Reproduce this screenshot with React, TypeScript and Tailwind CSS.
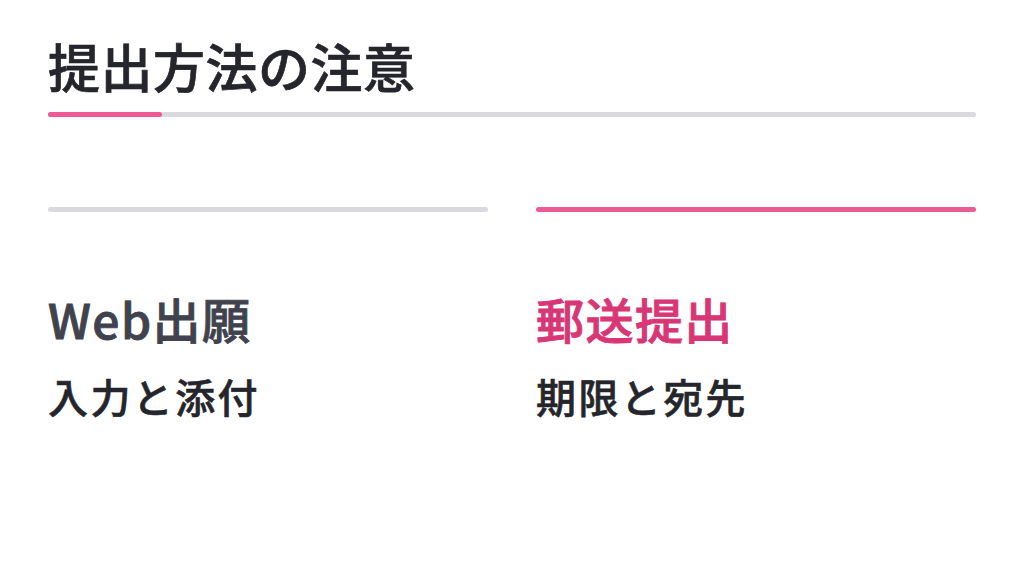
import React from 'react';

const tabs = [
    { title: 'Web出願', sub: '入力と添付', active: false },
    { title: '郵送提出', sub: '期限と宛先', active: true },
];

export default function App() {
    return (
        <div
            className="w-[1024px] h-[576px] bg-white px-12 pt-[40px]"
            style={{ fontFamily: '"Noto Sans CJK JP", "Noto Sans", sans-serif' }}
        >
            <h1 className="text-[52px] leading-none font-medium tracking-[0.01em] text-[#25262b] [-webkit-text-stroke:0.7px_#25262b]">
                提出方法の注意
            </h1>
            <div className="mt-[20px] h-[5px] rounded-full bg-[#d9d9de] flex">
                <div className="w-[114px] h-full rounded-full bg-[#ec5b94]"></div>
            </div>

            {/* 提出方法タブ */}
            <div className="grid grid-cols-2 gap-12 mt-[90px]">
                {tabs.map((t) => (
                    <div key={t.title}>
                        <div
                            className={`h-[5px] rounded-full ${
                                t.active ? 'bg-[#ec5b94]' : 'bg-[#d9d9de]'
                            }`}
                        ></div>
                        <h2
                            className={`mt-[82px] text-[48px] leading-none font-medium tracking-[0.03em] ${
                                t.active
                                    ? 'text-[#d93676] [-webkit-text-stroke:0.9px_#d93676]'
                                    : 'text-[#40434d] [-webkit-text-stroke:0.9px_#40434d]'
                            }`}
                        >
                            {t.title}
                        </h2>
                        <p className="mt-[34px] text-[40px] leading-none font-medium tracking-[0.06em] text-[#25262b] [-webkit-text-stroke:0.6px_#25262b]">
                            {t.sub}
                        </p>
                    </div>
                ))}
            </div>
        </div>
    );
}
